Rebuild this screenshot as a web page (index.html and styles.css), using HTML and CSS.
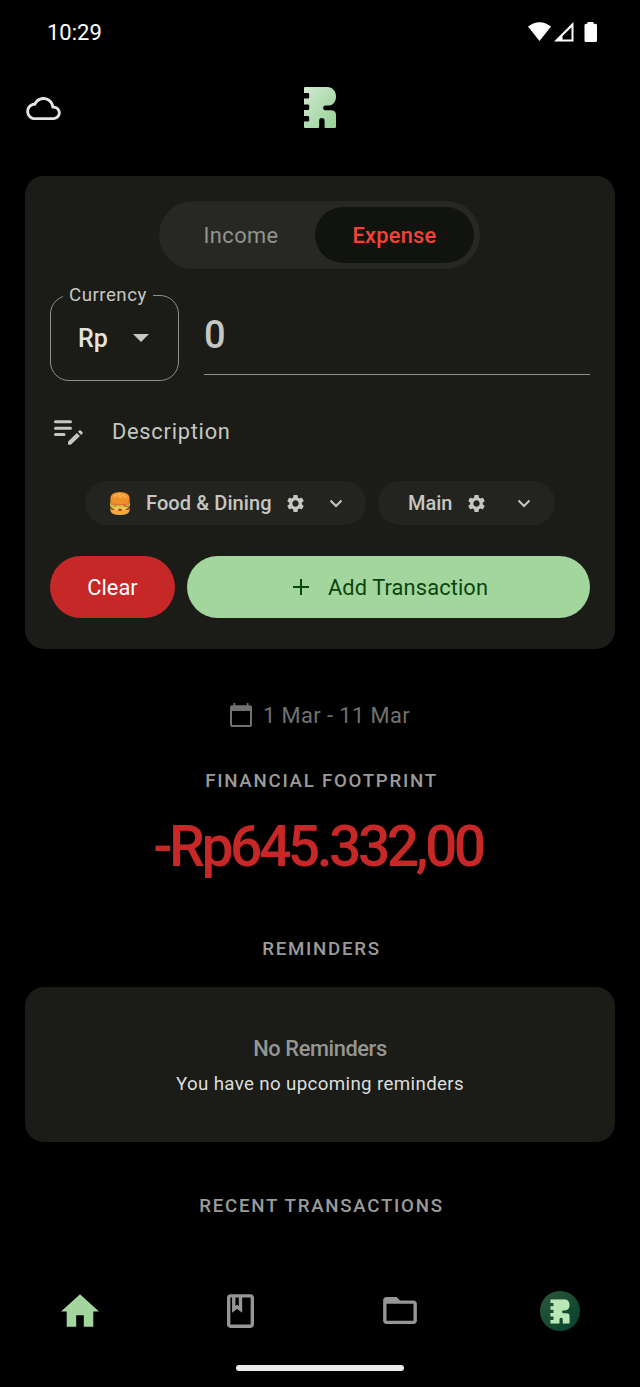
FILE: index.html
```html
<!DOCTYPE html>
<html lang="en">
<head>
<meta charset="utf-8">
<meta name="viewport" content="width=device-width">
<title>Home</title>
<link rel="stylesheet" href="styles.css">
</head>
<body>
<svg class="defs" aria-hidden="true">
  <defs>
    <linearGradient id="mint" x1="0" y1="0" x2="1" y2="1"><stop offset="0" stop-color="#d2ead0"/><stop offset="1" stop-color="#96d096"/></linearGradient>
    <linearGradient id="disc" x1="0" y1="0" x2="1" y2="1"><stop offset="0" stop-color="#2c5838"/><stop offset="1" stop-color="#04402f"/></linearGradient>
    <symbol id="logo" viewBox="0 0 32 41"><path d="M1 0H23C29 0 32 4.500 32 9.500C32 15 29 18.600 24 18.600H22Q19.200 18.600 19.200 20.900T22 23.300H27Q32 23.300 32 28V39.800Q32 41 30.800 41H21.500Q20.600 41 20.600 40V34Q20.600 31 17.800 31T15.200 34V40Q15.200 41 14 41H1Q0 41 0 40V34.600H4Q5.200 34.600 5.200 33.500V30Q5.200 28.900 4 28.900H0V23H4Q5.200 23 5.200 22V18.500Q5.200 17.400 4 17.400H0V11.600H4Q5.200 11.600 5.200 10.500V7Q5.200 6 4 6H0V1Q0 0 1 0Z"/></symbol>
    <symbol id="gear" viewBox="0 0 24 24"><path d="M19.140 12.940c.04-.3.060-.610.060-.940 0-.320-.020-.640-.070-.940l2.030-1.580c.180-.140.230-.410.120-.610l-1.920-3.320c-.120-.220-.370-.290-.590-.220l-2.390.960c-.5-.380-1.030-.7-1.620-.940l-.360-2.540c-.040-.240-.240-.410-.480-.410h-3.840c-.240 0-.430.170-.470.410l-.360 2.540c-.590.240-1.130.570-1.620.940l-2.390-.960c-.220-.080-.470 0-.590.220L2.740 8.870c-.120.210-.080.470.120.610l2.030 1.580c-.050.3-.090.630-.090.940s.020.640.070.940l-2.030 1.580c-.180.140-.230.410-.120.610l1.920 3.320c.120.220.370.290.590.220l2.390-.960c.5.380 1.030.7 1.620.940l.360 2.540c.050.240.240.410.480.410h3.840c.240 0 .440-.170.470-.410l.360-2.540c.590-.240 1.130-.560 1.620-.940l2.390.960c.220.080.470 0 .590-.220l1.920-3.320c.120-.220.070-.470-.120-.610l-2.010-1.580zM12 15.600c-1.980 0-3.600-1.620-3.600-3.600s1.620-3.600 3.600-3.600 3.600 1.620 3.600 3.600-1.620 3.600-3.600 3.600z"/></symbol>
    <symbol id="chevron" viewBox="0 0 14 9"><path d="M1.500 1.500L7 7L12.500 1.500" fill="none" stroke="currentColor" stroke-width="2"/></symbol>
  </defs>
</svg>
<div class="screen">
  <header class="status">
    <span class="clock">10:29</span>
    <svg class="signals" viewBox="0 0 70 20">
      <path d="M0 4.500Q11.500-4 23 4.500L11.500 19Z"/>
      <path fill-rule="evenodd" d="M26 19.500L45.500 0V19.500ZM34.500 17.400H43.500V5.200L34.500 14Z"/>
      <path d="M59.500 0H65.500V1.800H67.500Q69 1.800 69 3.300V18.500Q69 20 67.500 20H58Q56.500 20 56.500 18.500V3.300Q56.500 1.800 58 1.800H59.500Z"/>
    </svg>
  </header>
  <div class="appbar">
    <svg class="cloud" viewBox="0 4 24 16"><path d="M19.350 10.040C18.670 6.590 15.640 4 12 4 9.110 4 6.600 5.640 5.350 8.040 2.340 8.360 0 10.910 0 14c0 3.310 2.690 6 6 6h13c2.760 0 5-2.240 5-5 0-2.640-2.050-4.780-4.650-4.960zM19 18H6c-2.210 0-4-1.790-4-4 0-2.050 1.530-3.760 3.560-3.970l1.070-.110.5-.950C8.080 7.140 9.940 6 12 6c2.620 0 4.880 1.860 5.390 4.430l.3 1.500 1.530.110c1.560.1 2.780 1.410 2.780 2.960 0 1.650-1.350 3-3 3z"/></svg>
    <svg class="brand"><use href="#logo" fill="url(#mint)"/></svg>
    <span></span>
  </div>

  <main>
    <section class="card entry">
      <div class="toggle">
        <span class="option"><span class="t-income">Income</span></span>
        <span class="option selected"><span class="t-expense">Expense</span></span>
      </div>
      <div class="amount-row">
        <fieldset class="currency">
          <legend>Currency</legend>
          <div class="currency-value"><span class="t-rp">Rp</span><svg viewBox="0 0 16 8"><path d="M0 0H16L8 8Z"/></svg></div>
        </fieldset>
        <div class="amount">0</div>
      </div>
      <div class="description">
        <svg viewBox="0 0 30 25">
          <g fill="none" stroke="currentColor" stroke-width="3" stroke-linecap="round"><path d="M1.500 1.800H16.500M1.500 8.200H16.500M1.500 14.600H10"/></g>
          <path d="M14.200 21.500L22.800 12.900L26 16.100L17.400 24.300Q17 24.700 16.400 24.700H14.800Q14 24.700 14 23.900V22.200Q14 21.700 14.200 21.500ZM24 11.700L25.200 10.500Q26 9.800 26.800 10.500L28.400 12.100Q29.200 12.900 28.400 13.700L27.200 14.900Z"/>
        </svg>
        <span>Description</span>
      </div>
      <div class="chips">
        <div class="chip food">
          <svg class="burger" viewBox="0 0 22 24">
            <path d="M1 16.500H21V19Q21 24 11 24T1 19Z" fill="#f5a83c"/>
            <path d="M1 14Q11 12 21 14V17.500Q19 20 15 18L11 20L7 18Q3 20 1 17.500Z" fill="#9b4b36"/>
            <path d="M2 16L11 14L20 16L15 19.500L11 17L7 19.500Z" fill="#ffc44d"/>
            <path d="M.5 11H21.500V14Q20 16 18 14.500T13.500 15T9 15T4.500 15T.5 14Z" fill="#b5cf38"/>
            <path d="M1 11.500H21V13Q11 14.500 1 13Z" fill="#e56c3a"/>
            <path d="M1 11V7Q1 0 11 0T21 7V11Q18 12.600 11 12.600T1 11Z" fill="#ee9128"/>
            <path d="M3 5Q5 1 11 1T19 5Q14 7 3 5Z" fill="#f59f3a"/>
            <g fill="#ffe1a2"><circle cx="6" cy="4" r=".6"/><circle cx="10" cy="2.500" r=".6"/><circle cx="14" cy="3.500" r=".6"/><circle cx="11" cy="5.500" r=".6"/><circle cx="17" cy="5.500" r=".6"/></g>
          </svg>
          <span class="t-food">Food &amp; Dining</span>
          <svg class="gear"><use href="#gear"/></svg>
          <svg class="chevron"><use href="#chevron"/></svg>
        </div>
        <div class="chip account">
          <span class="t-main">Main</span>
          <svg class="gear"><use href="#gear"/></svg>
          <svg class="chevron"><use href="#chevron"/></svg>
        </div>
      </div>
      <div class="actions">
        <button class="clear"><span>Clear</span></button>
        <button class="add"><svg viewBox="0 0 16 16"><path d="M8 0V16M0 8H16" stroke="currentColor" stroke-width="2"/></svg><span>Add Transaction</span></button>
      </div>
    </section>

    <div class="period">
      <svg viewBox="0 0 22 24"><path fill-rule="evenodd" d="M3.500 0H5.200V2.200H16.800V0H18.500V2.200H20Q22 2.200 22 4.200V22Q22 24 20 24H2Q0 24 0 22V4.200Q0 2.200 2 2.200H3.500ZM2 8V22H20V8Z"/></svg>
      <span>1 Mar - 11 Mar</span>
    </div>
    <h2 class="h-footprint"><span>FINANCIAL FOOTPRINT</span></h2>
    <div class="total"><span>-Rp645.332,00</span></div>
    <h2 class="h-reminders"><span>REMINDERS</span></h2>
    <section class="card reminders">
      <h3><span>No Reminders</span></h3>
      <p><span>You have no upcoming reminders</span></p>
    </section>
    <h2 class="h-recent"><span>RECENT TRANSACTIONS</span></h2>
  </main>

  <nav class="tabs">
    <a class="active"><svg class="i-home" viewBox="2 3 20 17"><path d="M10 20v-6h4v6h5v-8h3L12 3 2 12h3v8z"/></svg></a>
    <a><svg class="i-book" viewBox="4 2 16 20"><path d="M18 2H6c-1.100 0-2 .9-2 2v16c0 1.100.9 2 2 2h12c1.100 0 2-.9 2-2V4c0-1.100-.9-2-2-2zM9 4h2v5l-1-.750L9 9V4zm9 16H6V4h1v9l3-2.250L13 13V4h5v16z"/></svg></a>
    <a><svg class="i-folder" viewBox="2 4 20 16"><path d="M20 6h-8l-2-2H4c-1.100 0-1.990.9-1.990 2L2 18c0 1.100.9 2 2 2h16c1.100 0 2-.9 2-2V8c0-1.100-.9-2-2-2zm0 12H4V8h16v10z"/></svg></a>
    <a><svg class="i-profile" viewBox="0 0 40 40"><circle cx="20" cy="20" r="20" fill="url(#disc)"/><use href="#logo" x="10" y="8.300" width="20" height="24.500" fill="#b9e7b5"/></svg></a>
  </nav>
  <div class="gesture"></div>
</div>
</body>
</html>
```
FILE: styles.css
```css
* { box-sizing: border-box; }
body { margin: 0; background: #000; color: #c5c7c0; font-family: Roboto, sans-serif; font-size: 21.8px; }
svg { display: block; fill: currentColor; flex: none; }
.defs { position: absolute; width: 0; height: 0; }
h2, h3, p { margin: 0; font-weight: 400; }
span { white-space: nowrap; }

.screen { height: 1387px; display: flex; flex-direction: column; overflow: hidden; }
.status { height: 64px; padding: 0 42px 0 47px; display: flex; align-items: center; justify-content: space-between; color: #fff; }
.clock { font-size: 22px; line-height: 26px; padding-top: 1px; }
.signals { width: 70px; height: 20px; }
.appbar { height: 88px; padding: 0 25px; display: grid; grid-template-columns: 1fr 32px 1fr; align-items: center; }
.cloud { width: 35px; height: 23px; color: #e3e3df; margin-left: 1px; }
.brand { width: 32px; height: 41px; margin-top: -1px; }
main { padding: 24px 25px 0; flex: 1; }

.card { background: #1b1c18; border-radius: 19px; }
.entry { height: 473px; padding: 25px 25px 0; }
.toggle { width: 321px; height: 68px; margin-left: 109px; padding: 6px; border-radius: 34px; background: #272824; display: flex; color: #92948e; }
.option { flex: none; width: 150px; display: flex; align-items: center; justify-content: center; padding-left: 2px; }
.option.selected { width: 159px; border-radius: 28px; background: #11130f; color: #f44336; font-weight: 500; padding: 0; }
.t-income { letter-spacing: .45px; }
.t-expense { letter-spacing: .25px; }

.amount-row { display: flex; gap: 25px; margin-top: 15px; }
.currency { width: 129px; height: 97px; margin: 0; padding: 0 0 0 27px; border: 1.500px solid #8d9189; border-radius: 19px; min-width: 0; }
.currency legend { font-size: 18.700px; line-height: 22px; margin-left: -15px; padding: 0 6px; letter-spacing: .5px; }
.currency-value { height: 64px; display: flex; align-items: center; gap: 26px; }
.t-rp { font-size: 25px; font-weight: 500; color: #e3e3dc; }
.currency-value svg { width: 16px; height: 8px; margin-left: -1px; }
.amount { flex: 1; height: 91px; border-bottom: 1.500px solid #8d9189; font-size: 38px; line-height: 45px; padding-top: 29px; font-weight: 500; }

.description { margin-top: 36px; height: 28px; padding-left: 4px; display: flex; gap: 28px; align-items: center; letter-spacing: .75px; }
.description svg { width: 30px; height: 25px; margin-top: 3px; }

.chips { display: flex; justify-content: center; gap: 12px; margin-top: 36px; }
.chip { height: 44px; border-radius: 22px; background: #232420; display: flex; align-items: center; font-size: 20px; font-weight: 500; }
.food { width: 281px; padding-left: 24px; }
.account { width: 177px; padding-left: 30px; }
.burger { width: 22px; height: 23px; margin-right: 15px; }
.t-food { letter-spacing: .1px; }
.gear { width: 21px; height: 21px; margin-left: 13px; }
.chevron { width: 14px; height: 9px; margin-left: 23px; }
.account .chevron { margin-left: 30px; }

.actions { display: flex; gap: 12px; margin-top: 31px; }
button { height: 62px; border: 0; padding: 0; border-radius: 31px; font: inherit; font-size: 21.800px; display: flex; align-items: center; justify-content: center; }
.clear { width: 125px; background: #c62828; color: #fff; }
.add { flex: 1; background: #a2d69c; color: #0b4510; gap: 19px; padding-left: 4px; }
.add svg { width: 16px; height: 16px; }
.add span { letter-spacing: .13px; }

.period { height: 26px; margin-top: 53px; display: flex; align-items: center; justify-content: center; gap: 11px; color: #71726f; }
.period svg { width: 22px; height: 24px; }
.period span { letter-spacing: .45px; }
h2 { text-align: center; color: #9b9c99; font-size: 18.700px; line-height: 22px; letter-spacing: 1.730px; padding-left: 3px; font-weight: 500; }
.h-footprint { margin-top: 42px; }
.total { margin-top: 22px; height: 66px; line-height: 66px; font-size: 57px; font-weight: 500; text-align: center; color: #c62828; letter-spacing: -3.500px; padding-right: 4px; }
.h-reminders { margin-top: 58px; }
.reminders { height: 155px; margin-top: 27px; padding-top: 49px; text-align: center; }
.reminders h3 { color: #959691; font-size: 21.800px; line-height: 26px; font-weight: 500; letter-spacing: -.4px; }
.reminders p { color: #dddeda; font-size: 18.700px; line-height: 22px; margin-top: 11px; letter-spacing: .37px; }
.h-recent { margin-top: 53px; }

.tabs { height: 77px; display: grid; grid-template-columns: repeat(4, 1fr); color: #969696; }
.tabs a { display: flex; align-items: center; justify-content: center; }
.tabs .active { color: #a2d69c; }
.i-home { width: 38px; height: 33px; }
.i-book { width: 27px; height: 34px; }
.i-folder { width: 34px; height: 27px; }
.i-profile { width: 40px; height: 40px; }
.gesture { width: 168px; height: 6px; margin: 16px auto 16px; border-radius: 3px; background: #ededed; }
```
